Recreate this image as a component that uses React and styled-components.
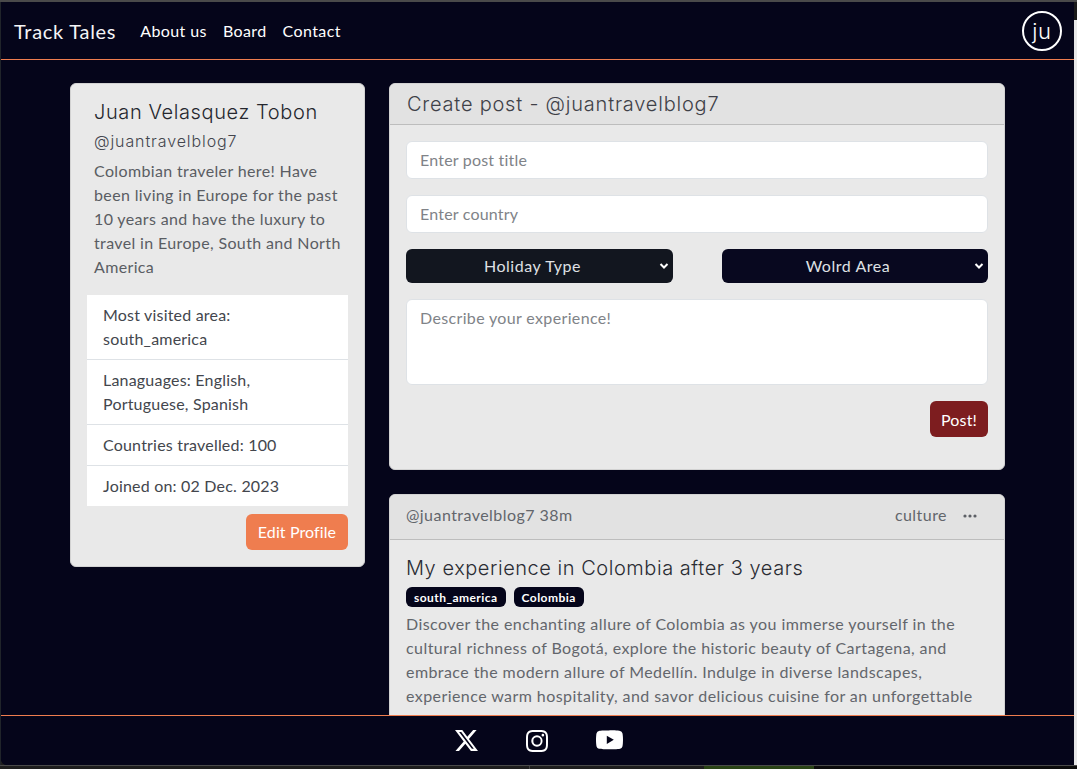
import React from 'react';
import styled, { createGlobalStyle } from 'styled-components';
import { BsTwitterX, BsInstagram, BsYoutube } from 'react-icons/bs';

const Global = createGlobalStyle`
  * { box-sizing: border-box; }
  html, body { margin: 0; height: 100%; overflow: hidden; background: #1e1e1e; }
  #root { height: 100vh; }
`;
const Q = `"Lato", "Open Sans", sans-serif`;
const M = `"Inter", "Noto Sans", sans-serif`;

const Screen = styled.div`height: 100vh; display: flex; flex-direction: column;`;
const TopEdge = styled.div`flex: none; height: 2px; background: #4a4a4a;`;
const WindowRow = styled.div`flex: 1; min-height: 0; display: flex;`;
const LeftEdge = styled.div`flex: none; width: 1px; background: #20242a;`;
const RightEdge = styled.div`flex: none; width: 3px; background: linear-gradient(#1a1a1a 18px, #e9e9e9 18px);`;
const Ground = styled.div`flex: none; height: 4px; border-top: 1px solid #4a4a4a; display: flex;`;
const GroundPart = styled.div`
  width: ${p => p.$w}px; flex: ${p => (p.$w ? 'none' : 1)}; background: ${p => p.$bg};
  border-right: ${p => (p.$divide ? '1px solid #444' : '0')};
`;

const Frame = styled.div`
  flex: 1; min-width: 0; background: #05051a; display: flex; flex-direction: column; overflow: hidden;
  border-radius: 0 0 0 6px; color: #fff; font-family: ${Q};
`;
const Nav = styled.header`
  flex: none; height: 58px; border-bottom: 1px solid #ef7d4f; display: flex; align-items: center;
  padding: 0 12px;
`;
const Brand = styled.div`font-size: 20px; font-weight: 400; margin: 0 24px 0 1px; letter-spacing: .72px; color: #f4f4f6;`;
const NavLinks = styled.nav`display: flex; gap: 16px; flex: 1;`;
const NavLink = styled.a`font-size: 16px; letter-spacing: .4px; color: #fff;`;
const Avatar = styled.div`
  width: 40px; height: 40px; border-radius: 50%; border: 2px solid #fff; display: flex; align-items: center;
  justify-content: center; font-family: ${M}; font-size: 22px; font-weight: 300; letter-spacing: .8px;
`;
const Main = styled.main`
  flex: 1; min-height: 0; overflow: hidden; padding: 23px 0 0 69px; display: flex; gap: 24px; align-items: flex-start;
`;
const Card = styled.section`
  background: #e9e9e9; border: 1px solid #d2d2d2; border-radius: 6px; color: #212529; overflow: hidden;
`;
const ProfileCard = styled(Card)`
  width: 295px; flex: none; padding: 16px; display: flex; flex-direction: column;
`;
const Name = styled.h2`margin: 0 0 5px 7px; font: 300 20px/24px ${M}; letter-spacing: .6px; color: #25272e;`;
const Handle = styled.div`margin: 0 0 6px 7px; font: 300 16px/24px ${M}; letter-spacing: .9px; color: #43454d;`;
const Bio = styled.p`margin: 0 0 16px 7px; font-size: 16px; line-height: 24px; color: #5a5d63; letter-spacing: .36px;`;
const Facts = styled.ul`margin: 0 0 8px; padding: 0; list-style: none; background: #fff; color: #43464d;`;
const Fact = styled.li`
  padding: 8px 16px; font-size: 16px; line-height: 24px; letter-spacing: .2px;
  & + & { border-top: 1px solid #dee2e6; }
`;
const EditBtn = styled.button`
  align-self: flex-end; height: 36px; width: 102px; border: 0; border-radius: 6px; background: #ef7d4f; color: #fff;
  font: 400 16px ${Q}; letter-spacing: .1px; padding-bottom: 2px;
`;
const Column = styled.div`width: 616px; flex: none; display: flex; flex-direction: column; gap: 24px;`;
const CardHead = styled.div`
  background: #e2e2e2; border-bottom: 1px solid #bdbdbd; padding: 0 16px;
`;
const CreateHead = styled(CardHead)`
  height: 41px; display: flex; align-items: center; font: 300 20px ${M}; letter-spacing: .78px; color: #3f4148; padding-left: 17px;
`;
const CreateBody = styled.form`padding: 16px 16px 32px; display: flex; flex-direction: column;`;
const Input = styled.div`
  height: 38px; background: #fff; border: 1px solid #dee2e6; border-radius: 6px; padding: 0 13px 2px;
  display: flex; align-items: center; color: #808388; font-size: 16px; margin-bottom: 16px; letter-spacing: .2px;
`;
const SelectRow = styled.div`display: grid; grid-template-columns: 267px 266px; justify-content: space-between; margin-bottom: 16px;`;
const Select = styled.div`
  height: 34px; border-radius: 6px; background: ${p => p.$bg}; color: #dfe0e4; font-size: 16px; letter-spacing: .55px;
  display: flex; align-items: center; justify-content: center; position: relative; padding: 0 14px 2px 0;
`;
const Caret = styled.svg`position: absolute; right: 4px; top: 13px;`;
const Area = styled(Input)`height: 86px; align-items: flex-start; padding-top: 8px; margin-bottom: 16px; letter-spacing: .35px;`;
const Actions = styled.div`display: flex; justify-content: flex-end;`;
const PostBtn = styled.button`
  width: 58px; height: 36px; border: 0; border-radius: 6px; background: #7d1d1f; color: #fff; font: 400 16px ${Q}; letter-spacing: .2px;
`;
const PostHead = styled(CardHead)`
  height: 45px; display: flex; align-items: center; justify-content: space-between; color: #63666c; font-size: 16px; letter-spacing: .45px;
  padding-bottom: 5px;
`;
const HeadRight = styled.div`display: flex; align-items: center; gap: 16px; padding-right: 11px;`;
const Dots = styled.svg`margin-top: 3px;`;
const PostBody = styled.div`padding: 16px;`;
const PostTitle = styled.h3`margin: 0 0 7px; font: 300 20px/24px ${M}; letter-spacing: .54px; color: #2a2c33;`;
const Tags = styled.div`display: flex; gap: 8px; margin-bottom: 5px;`;
const Tag = styled.span`
  height: 20px; padding: 0 8px; border-radius: 6px; background: #05051a; color: #fff; font-size: 12px; font-weight: 700; letter-spacing: .45px;
  display: flex; align-items: center;
`;
const PostText = styled.p`margin: 0; font-size: 16px; line-height: 24px; color: #63666c; letter-spacing: .43px;`;
const Footer = styled.footer`
  flex: none; height: 50px; border-top: 1px solid #ef7d4f; display: flex; align-items: center; justify-content: center; gap: 48px;
  background: #05051a; color: #fff; padding-left: 2px;
`;

const Chevron = () => (
  <Caret width="10" height="8" viewBox="0 0 10 8"><path d="M1.5 2 5 5.5 8.5 2" fill="none" stroke="#fff" strokeWidth="2" /></Caret>
);

export default function App() {
  return (
    <>
      <Global />
      <Screen>
        <TopEdge />
        <WindowRow>
          <LeftEdge />
          <Frame>
            <Nav>
              <Brand>Track Tales</Brand>
              <NavLinks>
                <NavLink>About us</NavLink>
                <NavLink>Board</NavLink>
                <NavLink>Contact</NavLink>
              </NavLinks>
              <Avatar>ju</Avatar>
            </Nav>
            <Main>
              <ProfileCard>
                <Name>Juan Velasquez Tobon</Name>
                <Handle>@juantravelblog7</Handle>
                <Bio>Colombian traveler here! Have been living in Europe for the past 10 years and have the luxury to travel in Europe, South and North America</Bio>
                <Facts>
                  <Fact>Most visited area: south_america</Fact>
                  <Fact>Lanaguages: English, Portuguese, Spanish</Fact>
                  <Fact>Countries travelled: 100</Fact>
                  <Fact>Joined on: 02 Dec. 2023</Fact>
                </Facts>
                <EditBtn>Edit Profile</EditBtn>
              </ProfileCard>
              <Column>
                <Card>
                  <CreateHead>Create post - @juantravelblog7</CreateHead>
                  <CreateBody>
                    <Input>Enter post title</Input>
                    <Input>Enter country</Input>
                    <SelectRow>
                      <Select $bg="#12161f">Holiday Type<Chevron /></Select>
                      <Select $bg="#08081f">Wolrd Area<Chevron /></Select>
                    </SelectRow>
                    <Area>Describe your experience!</Area>
                    <Actions><PostBtn>Post!</PostBtn></Actions>
                  </CreateBody>
                </Card>
                <Card>
                  <PostHead>
                    <span>@juantravelblog7 38m</span>
                    <HeadRight>
                      <span>culture</span>
                      <Dots width="14" height="4" viewBox="0 0 14 4" fill="#5d6066"><circle cx="2" cy="2" r="1.6" /><circle cx="7" cy="2" r="1.6" /><circle cx="12" cy="2" r="1.6" /></Dots>
                    </HeadRight>
                  </PostHead>
                  <PostBody>
                    <PostTitle>My experience in Colombia after 3 years</PostTitle>
                    <Tags><Tag>south_america</Tag><Tag>Colombia</Tag></Tags>
                    <PostText>Discover the enchanting allure of Colombia as you immerse yourself in the cultural richness of Bogotá, explore the historic beauty of Cartagena, and embrace the modern allure of Medellín. Indulge in diverse landscapes, experience warm hospitality, and savor delicious cuisine for an unforgettable journey through this vibrant country.</PostText>
                  </PostBody>
                </Card>
              </Column>
            </Main>
            <Footer>
              <BsTwitterX size={23} />
              <BsInstagram size={22} />
              <BsYoutube size={27} />
            </Footer>
          </Frame>
          <RightEdge />
        </WindowRow>
        <Ground>
          <GroundPart $w={530} $bg="#1e1e1e" $divide />
          <GroundPart $w={174} $bg="#1e1e1e" />
          <GroundPart $w={110} $bg="#2a4416" />
          <GroundPart $bg="#0c0c0c" />
        </Ground>
      </Screen>
    </>
  );
}
